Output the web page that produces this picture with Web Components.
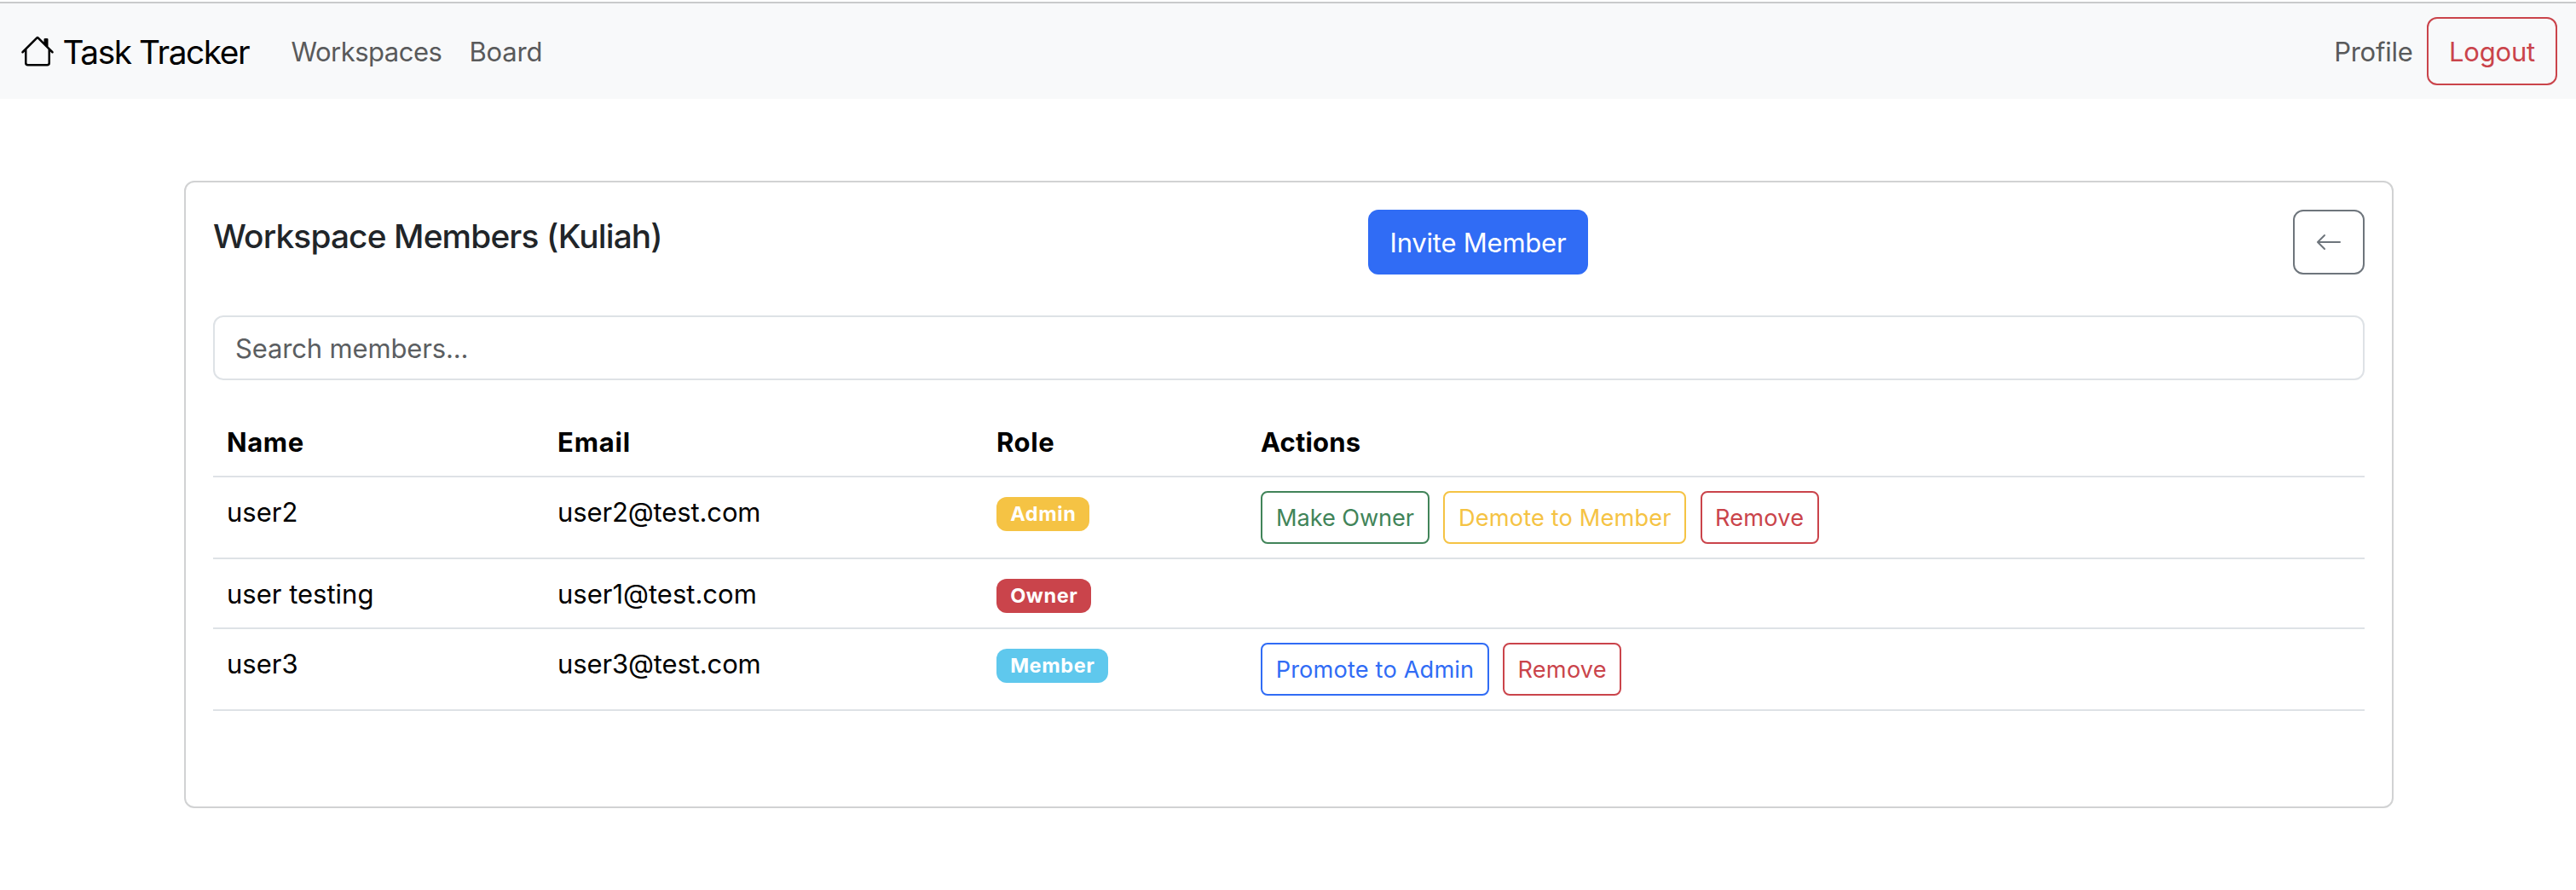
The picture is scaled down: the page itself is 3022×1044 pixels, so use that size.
<!DOCTYPE html>
<html lang="en">
<head>
<meta charset="utf-8">
<title>Task Tracker</title>
<style>
  body { margin: 0; background: #fff; color: #000; font: 400 31px/48px Inter, "Liberation Sans", sans-serif; }
</style>
</head>
<body>
<app-page></app-page>

<template id="t-icon">
  <style>
    :host { display: block; width: var(--size, 32px); height: var(--size, 32px); flex: none; }
    svg { display: block; width: 100%; height: 100%; fill: currentColor; }
  </style>
  <svg viewBox="0 0 16 16"><path fill-rule="evenodd"/></svg>
</template>

<template id="t-link">
  <style>
    :host { display: block; padding-top: 2px; color: #595a5b; white-space: nowrap; }
  </style>
  <slot></slot>
</template>

<template id="t-button">
  <style>
    :host { display: block; flex: none; }
    button {
      box-sizing: border-box; display: flex; align-items: center; justify-content: center;
      width: 100%; height: var(--h, 76px); margin: 0; padding: 2px 0 0;
      border: 2px solid var(--c); border-radius: 12px; background: transparent; color: var(--c);
      font: inherit; line-height: 48px; letter-spacing: inherit; white-space: nowrap;
    }
    :host([size="sm"]) { font-size: 27.2px; --h: 62px; }
    :host([size="sm"]) button { border-radius: 8px; line-height: 42px; }
    :host([tone="primary"]) { --c: #306cf5; }
    :host([tone="danger"]) { --c: #ca444b; }
    :host([tone="success"]) { --c: #418459; }
    :host([tone="warning"]) { --c: #f5c344; }
    :host([tone="secondary"]) { --c: #6e757c; }
    :host([tone="secondary"]) button { padding: 0; }
    :host([filled]) button { background: var(--c); color: #fff; }
  </style>
  <button type="button"><slot></slot></button>
</template>

<template id="t-badge">
  <style>
    :host {
      display: flex; align-items: center; justify-content: center; box-sizing: border-box;
      height: 40px; border-radius: 12px; color: #fff;
      font-size: 23.5px; font-weight: 700; line-height: 24px; letter-spacing: .6px; text-indent: .6px;
    }
    :host([role-name="Admin"]) { width: 109px; background: #f5c344; }
    :host([role-name="Owner"]) { width: 111px; background: #ca444b; }
    :host([role-name="Member"]) { width: 131px; background: #5fc8ed; }
  </style>
  <span></span>
</template>

<template id="t-row">
  <style>
    :host {
      display: grid; grid-template-columns: 388px 515px 310px 1fr; align-items: start;
      box-sizing: border-box; padding: 16px; height: 96px; border-bottom: 2px solid #dee2e6;
    }
    :host([head]), :host([compact]) { height: 82px; }
    :host([head]) { font-weight: 700; letter-spacing: .6px; }
    ::slotted(span) { padding-top: 1px; }
    .actions { display: flex; gap: 16.2px; }
    .role { padding-top: 7px; }
    :host([head]) .role { padding-top: 1px; }
  </style>
  <slot name="name"></slot>
  <slot name="email"></slot>
  <div class="role"><slot name="role"></slot></div>
  <div class="actions"><slot name="actions"></slot></div>
</template>

<template id="t-search">
  <style>
    :host { display: block; }
    input {
      display: block; box-sizing: border-box; width: 100%; height: 76px; padding: 0 24px;
      border: 2px solid #dee2e6; border-radius: 12px; background: #fff; outline: 0;
      font: inherit; letter-spacing: -.15px; color: #212529;
    }
    input::placeholder { color: #5b5e61; opacity: 1; }
  </style>
  <input type="text">
</template>

<template id="t-navbar">
  <style>
    :host {
      display: flex; align-items: center; justify-content: space-between; box-sizing: border-box;
      height: 112px; padding: 0 22px 0 24px; background: #f8f9fa;
    }
    .left, .right, .brand { display: flex; align-items: center; }
    .brand { gap: 9.5px; margin-right: 49.3px; font-size: 38.8px; letter-spacing: -1.42px; white-space: nowrap; }
    .brand span { padding-top: 1px; }
    .links { display: flex; gap: 32px; }
    .right { gap: 16.5px; }
    app-icon { --size: 40px; }
  </style>
  <div class="left">
    <div class="brand"><app-icon name="house"></app-icon><span>Task Tracker</span></div>
    <div class="links">
      <nav-link style="letter-spacing:-.5px">Workspaces</nav-link>
      <nav-link style="letter-spacing:-.15px">Board</nav-link>
    </div>
  </div>
  <div class="right">
    <nav-link style="letter-spacing:-.25px">Profile</nav-link>
    <app-button tone="danger" style="width:153px;--h:80px;letter-spacing:-.16px">Logout</app-button>
  </div>
</template>

<template id="t-card">
  <style>
    :host {
      display: flex; flex-direction: column; box-sizing: border-box; height: 736px;
      border: 2px solid #d1d2d3; border-radius: 12px; padding: 32px; background: #fff;
    }
    header { display: flex; justify-content: space-between; align-items: flex-start; margin-bottom: 48px; }
    h5 { width: 528px; margin: 0; padding-top: 7px; color: #212529; font-size: 38.8px; font-weight: 500; line-height: 48px; letter-spacing: -.84px; white-space: nowrap; }
    .table { padding-top: 32px; }
  </style>
  <header>
    <h5><slot name="title"></slot></h5>
    <slot name="primary"></slot>
    <slot name="back"></slot>
  </header>
  <slot name="search"></slot>
  <div class="table"><slot></slot></div>
</template>

<template id="t-page">
  <style>
    :host { display: block; border-top: 2px solid #fff; }
    .rule { height: 2px; background: #c9cacb; }
    main { padding: 96px 214px 0 216px; }
  </style>
  <div class="rule"></div>
  <app-navbar></app-navbar>
  <main>
    <members-card>
      <span slot="title">Workspace Members (Kuliah)</span>
      <app-button slot="primary" tone="primary" filled style="width:258px;letter-spacing:-.22px">Invite Member</app-button>
      <app-button slot="back" tone="secondary" style="width:84px"><app-icon name="arrow-left"></app-icon></app-button>
      <search-field slot="search" placeholder="Search members..."></search-field>
      <member-row head>
        <span slot="name">Name</span><span slot="email" style="letter-spacing:.8px">Email</span>
        <span slot="role">Role</span><span slot="actions" style="letter-spacing:.15px">Actions</span>
      </member-row>
      <member-row>
        <span slot="name">user2</span><span slot="email" style="letter-spacing:-.12px">user2@test.com</span>
        <role-badge slot="role" role-name="Admin"></role-badge>
        <app-button slot="actions" size="sm" tone="success" style="width:198px;letter-spacing:-.08px">Make Owner</app-button>
        <app-button slot="actions" size="sm" tone="warning" style="width:285.3px;letter-spacing:.16px">Demote to Member</app-button>
        <app-button slot="actions" size="sm" tone="danger" style="width:139px;letter-spacing:.2px">Remove</app-button>
      </member-row>
      <member-row compact>
        <span slot="name">user testing</span><span slot="email">user1@test.com</span>
        <role-badge slot="role" role-name="Owner"></role-badge>
      </member-row>
      <member-row>
        <span slot="name">user3</span><span slot="email" style="letter-spacing:-.12px">user3@test.com</span>
        <role-badge slot="role" role-name="Member"></role-badge>
        <app-button slot="actions" size="sm" tone="primary" style="width:268px;letter-spacing:.16px">Promote to Admin</app-button>
        <app-button slot="actions" size="sm" tone="danger" style="width:139px;letter-spacing:.2px">Remove</app-button>
      </member-row>
    </members-card>
  </main>
</template>

<script>
const ICONS = {
  "house": "M8.707 1.5a1 1 0 0 0-1.414 0L.646 8.146a.5.5 0 0 0 .708.708L2 8.207V13.5A1.5 1.5 0 0 0 3.5 15h9a1.5 1.5 0 0 0 1.5-1.5V8.207l.646.647a.5.5 0 0 0 .708-.708L13 5.793V2.5a.5.5 0 0 0-.5-.5h-1a.5.5 0 0 0-.5.5v1.293zM13 7.207V13.5a.5.5 0 0 1-.5.5h-9a.5.5 0 0 1-.5-.5V7.207l5-5z",
  "arrow-left": "M15 8a.5.5 0 0 0-.5-.5H2.707l3.147-3.146a.5.5 0 1 0-.708-.708l-4 4a.5.5 0 0 0 0 .708l4 4a.5.5 0 0 0 .708-.708L2.707 8.5H14.5A.5.5 0 0 0 15 8"
};

class Base extends HTMLElement {
  connectedCallback() {
    if (this.shadowRoot) return;
    const root = this.attachShadow({ mode: "open" });
    root.append(document.getElementById(this.constructor.template).content.cloneNode(true));
    this.ready(root);
  }
  ready() {}
}

customElements.define("app-icon", class extends Base {
  static template = "t-icon";
  ready(root) { root.querySelector("path").setAttribute("d", ICONS[this.getAttribute("name")]); }
});
customElements.define("nav-link", class extends Base { static template = "t-link"; });
customElements.define("app-button", class extends Base { static template = "t-button"; });
customElements.define("role-badge", class extends Base {
  static template = "t-badge";
  ready(root) { root.querySelector("span").textContent = this.getAttribute("role-name"); }
});
customElements.define("member-row", class extends Base { static template = "t-row"; });
customElements.define("search-field", class extends Base {
  static template = "t-search";
  ready(root) { root.querySelector("input").placeholder = this.getAttribute("placeholder"); }
});
customElements.define("app-navbar", class extends Base { static template = "t-navbar"; });
customElements.define("members-card", class extends Base { static template = "t-card"; });
customElements.define("app-page", class extends Base { static template = "t-page"; });
</script>
</body>
</html>
